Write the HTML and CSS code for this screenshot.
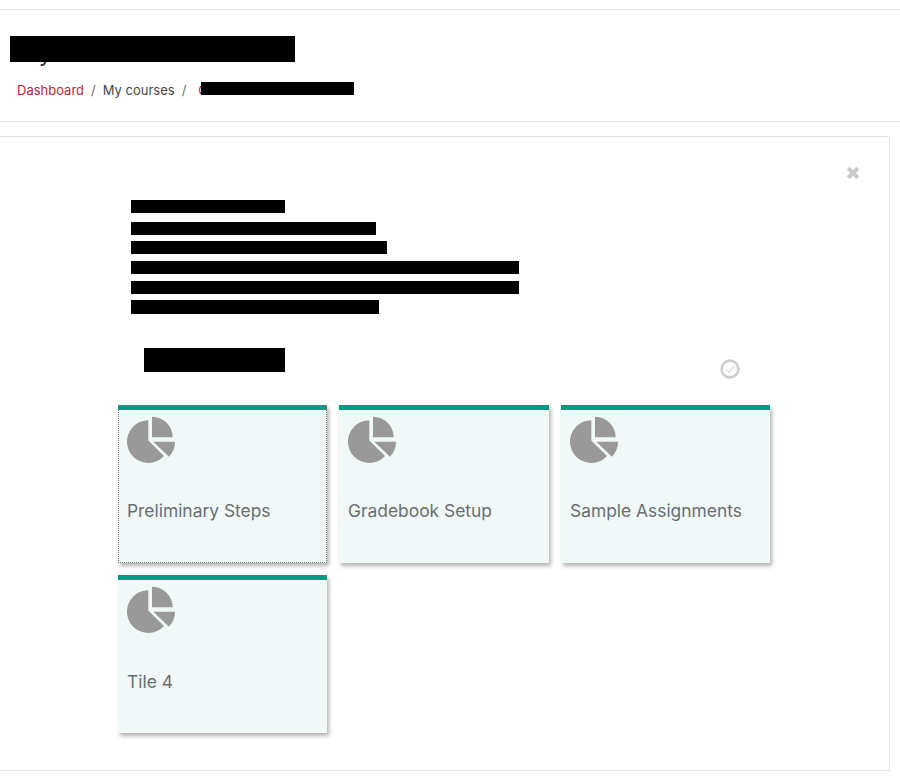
FILE: index.html
```html
<!DOCTYPE html>
<html lang="en">
<head>
<meta charset="utf-8">
<title>My courses</title>
<link rel="stylesheet" href="styles.css">
</head>
<body>
<header class="page-header">
  <h1 class="page-title">My<span class="redact redact-title"></span></h1>
  <nav class="crumbs">
    <a class="crumb-link" href="#">Dashboard</a>
    <span class="crumb-sep">/</span>
    <span class="crumb-text">My courses</span>
    <span class="crumb-sep">/</span>
    <a class="crumb-link crumb-last" href="#">C<span class="redact redact-crumb"></span></a>
  </nav>
</header>
<main class="card">
  <div class="card-top">
    <svg class="close" viewBox="0 0 14 14" aria-label="Close"><path d="M2.2 2.2 11.8 11.8M11.8 2.2 2.2 11.8"/></svg>
  </div>
  <div class="intro">
    <div class="bar bar-1"></div>
    <div class="bar bar-2"></div>
    <div class="bar bar-3"></div>
    <div class="bar bar-4"></div>
    <div class="bar bar-5"></div>
    <div class="bar bar-6"></div>
  </div>
  <div class="section-head">
    <div class="bar-head"></div>
    <svg class="done" viewBox="0 0 20 20" aria-label="Done"><circle class="done-ring" cx="10" cy="10" r="8.4"/><path class="done-tick" d="M6 10.5 9 13.5 14.5 6.5"/></svg>
  </div>
  <div class="tiles">
    <a class="tile tile-focus" href="#">
      <svg class="pie" viewBox="0 0 48 48"><path d="M21.3 4.3V24.5L37 40A21.3 21.3 0 1 1 21.3 4.3Z"/><path d="M25 .7V21.3H45.7A20.7 20.7 0 0 0 25 .7Z"/><path d="M26.3 25.7H48A21.7 21.7 0 0 1 42 40.7Z"/></svg>
      <span class="tile-title">Preliminary Steps</span>
    </a>
    <a class="tile" href="#">
      <svg class="pie" viewBox="0 0 48 48"><path d="M21.3 4.3V24.5L37 40A21.3 21.3 0 1 1 21.3 4.3Z"/><path d="M25 .7V21.3H45.7A20.7 20.7 0 0 0 25 .7Z"/><path d="M26.3 25.7H48A21.7 21.7 0 0 1 42 40.7Z"/></svg>
      <span class="tile-title">Gradebook Setup</span>
    </a>
    <a class="tile" href="#">
      <svg class="pie" viewBox="0 0 48 48"><path d="M21.3 4.3V24.5L37 40A21.3 21.3 0 1 1 21.3 4.3Z"/><path d="M25 .7V21.3H45.7A20.7 20.7 0 0 0 25 .7Z"/><path d="M26.3 25.7H48A21.7 21.7 0 0 1 42 40.7Z"/></svg>
      <span class="tile-title">Sample Assignments</span>
    </a>
    <a class="tile" href="#">
      <svg class="pie" viewBox="0 0 48 48"><path d="M21.3 4.3V24.5L37 40A21.3 21.3 0 1 1 21.3 4.3Z"/><path d="M25 .7V21.3H45.7A20.7 20.7 0 0 0 25 .7Z"/><path d="M26.3 25.7H48A21.7 21.7 0 0 1 42 40.7Z"/></svg>
      <span class="tile-title tile-title-low">Tile 4</span>
    </a>
  </div>
</main>
</body>
</html>
```
FILE: styles.css
```css
* { box-sizing: border-box; }
html, body { margin: 0; padding: 0; background: #fff; }
body {
  font-family: Inter, "Liberation Sans", sans-serif;
  color: #373a3c;
  height: 784px;
  overflow: hidden;
}
.page-header {
  margin-top: 9px;
  height: 113px;
  border-top: 1px solid #e3e3e3;
  border-bottom: 1px solid #e3e3e3;
  padding: 26px 0 0 17px;
}
.page-title {
  position: relative;
  margin: 0;
  font-size: 24px;
  font-weight: 400;
  line-height: 33px;
  height: 34px;
  color: #373a3c;
}
.redact { position: absolute; background: #000; display: block; }
.redact-title { left: -7px; top: 0; width: 285px; height: 26px; }
.crumbs {
  display: flex;
  align-items: center;
  margin-top: 11px;
  font-size: 13px;
  line-height: 18px;
}
.crumb-link { color: #b5243f; text-decoration: none; }
.crumb-sep { color: #6c6c6c; margin: 0 7px; }
.crumb-text { color: #43474a; }
.crumb-last { position: relative; margin-left: 5px; }
.redact-crumb { left: 3px; top: 1px; width: 153px; height: 13px; }
.card {
  margin-top: 14px;
  width: 890px;
  height: 635px;
  border: 1px solid #e3e3e3;
  border-left: 0;
}
.card-top {
  display: flex;
  justify-content: flex-end;
  padding: 29px 29px 0 0;
  height: 63px;
}
.close { width: 14px; height: 14px; display: block; }
.close path { fill: none; stroke: #c9c9c9; stroke-width: 4.2; }
.intro { padding-left: 131px; }
.bar { background: #000; height: 13px; margin-bottom: 7px; }
.bar-1 { width: 154px; margin-bottom: 9px; }
.bar-2 { width: 245px; margin-bottom: 6px; }
.bar-3 { width: 256px; }
.bar-4 { width: 388px; }
.bar-5 { width: 388px; margin-bottom: 6px; }
.bar-6 { width: 248px; height: 14px; margin-bottom: 0; }
.section-head {
  display: flex;
  justify-content: space-between;
  margin: 34px 0 0 144px;
  width: 596px;
  height: 57px;
}
.bar-head { width: 141px; height: 24px; background: #000; }
.done { width: 20px; height: 20px; margin-top: 11px; display: block; }
.done-ring { fill: none; stroke: #cdcdcd; stroke-width: 2.6; }
.done-tick { fill: none; stroke: #e4e4e4; stroke-width: 1.5; }
.tiles {
  display: grid;
  grid-template-columns: 209px 210px 209px;
  grid-auto-rows: 158px;
  gap: 12px;
  margin-left: 118px;
  width: 652px;
}
.tile {
  display: flex;
  flex-direction: column;
  background: #f0f8f8;
  border-top: 5px solid #009b84;
  box-shadow: 2px 3px 4px rgba(0, 0, 0, .3);
  padding: 6px 9px 0;
  text-decoration: none;
}
.tile-focus { outline: 1px dotted #777; outline-offset: -1px; }
.pie { width: 48px; height: 48px; display: block; fill: #999; }
.tile-title {
  margin-top: 35px;
  font-size: 17.4px;
  line-height: 24px;
  color: #6b6e70;
}
.tile-title-low { margin-top: 36px; }
```
